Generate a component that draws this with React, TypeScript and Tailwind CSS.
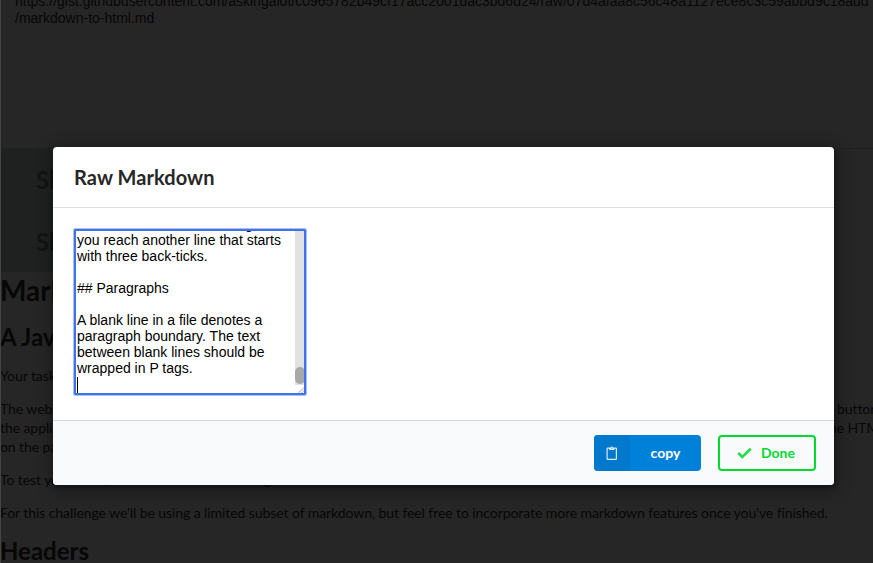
import React from "react";

const lines = [
  "you reach another line that starts",
  "with three back-ticks.",
  "",
  "## Paragraphs",
  "",
  "A blank line in a file denotes a",
  "paragraph boundary. The text",
  "between blank lines should be",
  "wrapped in P tags.",
];

function Page() {
  return (
    <div className="h-[563px] overflow-hidden border-l border-[#444545] bg-[#262626] whitespace-nowrap text-[#070707]">
      <div className="h-[148px] overflow-hidden pl-[14px] font-['Liberation_Sans',Arial,sans-serif] text-[14px] leading-4">
        <div className="-mt-[7px] w-[853px]">https://gist.githubusercontent.com/askingalot/c0965782b49cf17acc2001dac3bd6d24/raw/07d4afaa8c56c48a1127ece8c3c59abbd9c18add</div>
        <div className="mt-px">/markdown-to-html.md</div>
      </div>
      <div className="flex h-[124px]">
        <div className="w-[120px] bg-[#1f2121] pl-[35px] text-2xl leading-[62px] font-bold text-[#121313]">
          <div className="mt-[1px]">Show</div>
          <div>Show</div>
        </div>
        <div className="grow border-t border-[#202020]" />
      </div>
      <div className="-ml-px tracking-[-0.08px]">
        <h1 className="text-[28px] leading-9 font-bold tracking-normal">Markdown</h1>
        <h2 className="mt-[13px] text-2xl leading-[31px] font-bold tracking-normal">A JavaScript</h2>
        <p className="mt-[14px] leading-[19px]">Your task</p>
        <div className="mt-[14px] leading-[19px]">
          <div className="flex"><span className="w-[837px] shrink-0">The web page</span><span>buttons</span></div>
          <div className="flex"><span className="w-[824px] shrink-0">the application</span><span>the HTML</span></div>
          <div>on the page</div>
        </div>
        <div className="mt-[14px] flex leading-[19px]"><span className="w-[264px] shrink-0">To test your code,</span><span>g</span></div>
        <p className="mt-[14px] leading-[19px]">For this challenge we'll be using a limited subset of markdown, but feel free to incorporate more markdown features once you've finished.</p>
        <h2 className="mt-[13px] text-2xl leading-[31px] font-bold tracking-normal">Headers</h2>
      </div>
    </div>
  );
}

function Modal() {
  return (
    <section className="absolute top-[147px] left-[53px] flex h-[338px] w-[781px] flex-col overflow-hidden rounded-[4px] bg-white shadow-[1px_3px_3px_rgba(0,0,0,.2),1px_3px_15px_2px_rgba(0,0,0,.4)]">
      <header className="h-[61px] border-b border-[#dcdddd] px-[21px] pt-[17px] text-[20px] leading-[26px] font-bold tracking-[0.07px] text-[#272727]">Raw Markdown</header>
      <div className="grow px-[21px] pt-[21px]">
        <div className="flex h-[166px] w-[232px] overflow-hidden rounded-[1px] border-2 border-[#4073e8] font-['Liberation_Sans',Arial,sans-serif] text-[14px] leading-4 text-black outline-1 outline-[#a9c1f7]">
          <div className="w-[219px] shrink-0 overflow-hidden pl-px whitespace-nowrap">
            <div className="-mt-[15px] h-4 pl-[168px]">g</div>
            {lines.map((line, i) => <div key={i} className="h-4">{line}</div>)}
            <div className="mt-px h-4 w-px bg-black" />
          </div>
          <div className="flex w-[10px] shrink-0 flex-col bg-[#e2e2e2]">
            <div className="mt-[136px] h-[17px] rounded-full bg-[#a8a8a8]" />
            <svg className="mt-auto bg-white" width="10" height="8" viewBox="0 0 10 8" stroke="#555" strokeWidth="1" fill="none">
              <path d="M4 7.5L8.5 3M7 7.5L8.5 6" strokeDasharray="1 .5" />
            </svg>
          </div>
        </div>
      </div>
      <footer className="flex h-[65px] justify-end gap-[17px] border-t border-[#d8d9da] bg-[#f9fafb] pt-[14px] pr-[18px] font-bold">
        <button className="flex h-9 w-[107px] overflow-hidden rounded-[4px] bg-[#0081d9] text-white">
          <span className="flex h-9 w-9 items-center justify-center bg-[#0079cd]">
            <svg width="12" height="15" viewBox="0 0 12 15" fill="none" stroke="#d9ebf8" strokeWidth="1.2">
              <rect x="1.1" y="2.1" width="9.3" height="11.3" rx=".6" />
              <path d="M3.2 2h1.2a1.4 1.4 0 0 1 2.8 0h1.2v2.1H3.2z" fill="#d9ebf8" stroke="none" />
              <circle cx="5.8" cy="2" r=".5" fill="#0079cd" stroke="none" />
            </svg>
          </span>
          <span className="grow text-center leading-[35px]">copy</span>
        </button>
        <button className="flex h-9 w-[98px] items-center rounded-[4px] border-2 border-[#00d930] pl-[17px] text-[#00d930]">
          <svg className="-mt-px" width="15" height="12" viewBox="0 0 15 12" fill="none" stroke="#23dc4c" strokeWidth="2.6"><path d="M1.2 6L5.3 10L13.8 1.6" /></svg>
          <span className="-mt-[2px] ml-[9px]">Done</span>
        </button>
      </footer>
    </section>
  );
}

export default function App() {
  return (
    <main className="relative h-[563px] w-full overflow-hidden font-[Lato,sans-serif] text-[14px]">
      <Page />
      <Modal />
    </main>
  );
}
